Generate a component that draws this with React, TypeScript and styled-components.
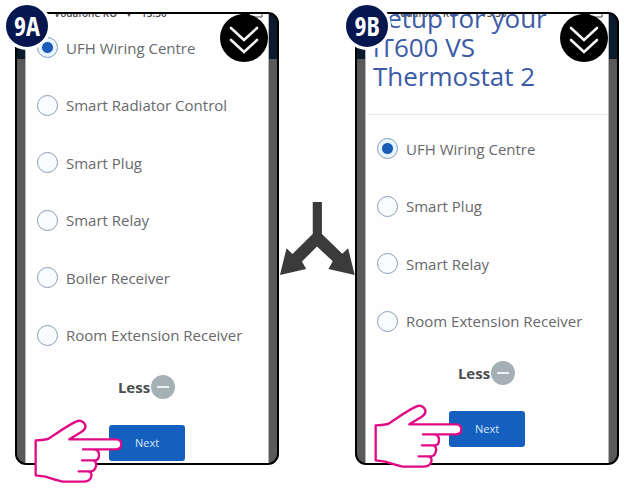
import React from "react";
import styled, { createGlobalStyle } from "styled-components";

const GlobalStyle = createGlobalStyle`
  *, *::before, *::after { box-sizing: border-box; }
  body {
    margin: 0;
    background: #fff;
    font-family: "Open Sans", "Noto Sans", sans-serif;
  }
`;

const Page = styled.main`
  display: grid;
  grid-template-columns: 1fr 76px 1fr;
  align-items: start;
  padding: 12px 5px 23px 15px;
`;

const Step = styled.section`
  position: relative;
  min-width: 0;
`;

const Phone = styled.div`
  overflow: hidden;
  padding: 0 8px;
  border: 2px solid #000;
  border-radius: 11px;
  background: linear-gradient(#0b1a2c 45px, #5a5a5a 45px);
`;

const Screen = styled.div<{ $bottom: number }>`
  position: relative;
  display: flex;
  flex-direction: column;
  overflow: hidden;
  padding-bottom: ${(p) => p.$bottom}px;
  border: solid #b4b6b8;
  border-width: 0 1px;
  background: #fefefe;
`;

const StatusBar = styled.div`
  position: absolute;
  top: -8px;
  left: 28px;
  right: 4px;
  display: flex;
  align-items: center;
  gap: 8px;
  color: #4a4a4c;
  font-size: 10px;
  font-weight: 600;
  line-height: 14px;
  white-space: nowrap;
`;

const Battery = styled.svg`
  margin-left: auto;
`;

const Title = styled.h1`
  position: relative;
  margin: -10px 1px 0;
  padding: 0 0 23px 6px;
  border-bottom: 1px solid #e6e7ea;
  color: #3c5ba6;
  font-size: 26px;
  font-weight: 400;
  line-height: 29px;
`;

const Options = styled.div<{ $height: number; $top: number }>`
  display: grid;
  grid-auto-rows: 1fr;
  height: ${(p) => p.$height}px;
  margin-top: ${(p) => p.$top}px;
  padding-left: 11px;
`;

const Option = styled.label`
  display: flex;
  align-items: center;
  gap: 8px;
  color: #68696c;
  font-size: 15px;
  line-height: 20px;
  white-space: nowrap;
`;

const Radio = styled.input`
  appearance: none;
  flex: none;
  width: 21px;
  height: 21px;
  margin: 0;
  border: 1px solid #8b9bb3;
  border-radius: 50%;
  background: #f8fcff;

  &:checked {
    background: radial-gradient(circle, #1a5bb8 5px, #e6f5ff 6px);
  }
`;

const LessButton = styled.button`
  display: flex;
  align-items: center;
  align-self: center;
  height: 26px;
  margin: 10px 0 0;
  padding: 0;
  border: 0;
  background: none;
  color: #4d4e50;
  font: 700 15px/20px "Open Sans", "Noto Sans", sans-serif;
`;

const NextButton = styled.button`
  align-self: center;
  width: 76px;
  height: 36px;
  margin: 25px 0 0;
  padding: 0;
  border: 0;
  border-radius: 3px;
  background: #1560be;
  color: #d6e6f8;
  font: 400 11px/16px "Open Sans", "Noto Sans", sans-serif;
`;

const Badge = styled.h2`
  position: absolute;
  top: -10px;
  left: -12px;
  display: grid;
  place-items: center;
  width: 48px;
  height: 48px;
  margin: 0;
  border: 3px solid #fff;
  border-radius: 50%;
  background: #06174f;
  color: #fff;
  font: 700 26px/30px "Open Sans Condensed", "Roboto Condensed", Roboto, sans-serif;
`;

const ScrollMark = styled.svg`
  position: absolute;
  top: 2px;
  right: 11px;
  width: 48px;
  height: 48px;
`;

const Pointer = styled.svg<{ $bottom: number }>`
  position: absolute;
  left: 19px;
  bottom: ${(p) => p.$bottom}px;
  width: 88px;
  height: 64px;
  pointer-events: none;
`;

const Fork = styled.svg`
  width: 100%;
  margin-top: 188px;
`;

type StepProps = {
  id: string;
  title?: string;
  options: string[];
  listHeight: number;
  listTop: number;
  bottom: number;
  pointerBottom: number;
};

function SetupStep({ id, title, options, listHeight, listTop, bottom, pointerBottom }: StepProps) {
  return (
    <Step>
      <Phone>
        <Screen $bottom={bottom}>
          <StatusBar>
            <span>Vodafone RO</span>
            <svg width="8" height="8" viewBox="0 0 8 8" aria-hidden="true">
              <path d="M0 1h8L4 8z" fill="#4a4a4c" />
            </svg>
            <span>13:30</span>
            <Battery width="24" height="10" viewBox="0 0 24 10" aria-hidden="true">
              <path d="M1 1h21v8H1z" fill="none" stroke="#4a4a4c" />
              <path d="M1 1h9v8H1z" fill="#111" />
            </Battery>
          </StatusBar>
          {title && <Title>{title}</Title>}
          <Options role="radiogroup" $height={listHeight} $top={listTop} aria-label="Device type">
            {options.map((name, i) => (
              <Option key={name}>
                <Radio type="radio" name={`device-${id}`} defaultChecked={i === 0} />
                {name}
              </Option>
            ))}
          </Options>
          <LessButton type="button">
            Less
            <svg width="26" height="26" viewBox="0 0 26 26" aria-hidden="true">
              <circle cx="13" cy="13" r="12" fill="#a5b0b4" />
              <path d="M7 13h12" stroke="#edf2f4" strokeWidth="2" />
            </svg>
          </LessButton>
          <NextButton type="button">Next</NextButton>
        </Screen>
      </Phone>
      <ScrollMark viewBox="0 0 48 48" aria-hidden="true">
        <circle cx="24" cy="24" r="24" fill="#000" />
        <path
          d="M11 14l13 12 13-12M11 26l13 12 13-12"
          fill="none"
          stroke="#f4f4f4"
          strokeWidth="2.6"
          strokeLinecap="round"
        />
      </ScrollMark>
      <Badge>{id}</Badge>
      <Pointer $bottom={pointerBottom} viewBox="0 0 264 192" aria-hidden="true">
        <path
          d="M5 64C18 64 29 63 42 60C63 47 96 22 126 8C137 2 149 6 154 18C156 28 150 34 142 39L106 61H246C256 61 262 68 262 76C262 85 256 91 246 91H147H177C190 91 195 98 195 107C195 117 190 124 182 124H144H174C184 124 188 132 186 141C184 150 179 157 170 157H134H160C170 157 174 163 172 172C170 184 162 188 146 188H86C69 184 52 179 34 173L5 169Z"
          fill="#fff"
          stroke="#e00a86"
          strokeWidth="7"
          strokeLinejoin="round"
        />
      </Pointer>
    </Step>
  );
}

export default function App() {
  return (
    <>
      <GlobalStyle />
      <Page>
        <SetupStep
          id="9A"
          options={[
            "UFH Wiring Centre",
            "Smart Radiator Control",
            "Smart Plug",
            "Smart Relay",
            "Boiler Receiver",
            "Room Extension Receiver",
          ]}
          listHeight={345}
          listTop={5}
          bottom={2}
          pointerBottom={-18}
        />
        <Fork viewBox="57 26 232 232" aria-hidden="true">
          <path
            d="M160 32H188V130L250 190L268 173L288 255L208 237L221 213L173 168L127 214L140 237L60 255L80 173L98 191L160 130Z"
            fill="#3b3b3b"
          />
        </Fork>
        <SetupStep
          id="9B"
          title="Setup for your iT600 VS Thermostat 2"
          options={["UFH Wiring Centre", "Smart Plug", "Smart Relay", "Room Extension Receiver"]}
          listHeight={230}
          listTop={5}
          bottom={16}
          pointerBottom={-3}
        />
      </Page>
    </>
  );
}
